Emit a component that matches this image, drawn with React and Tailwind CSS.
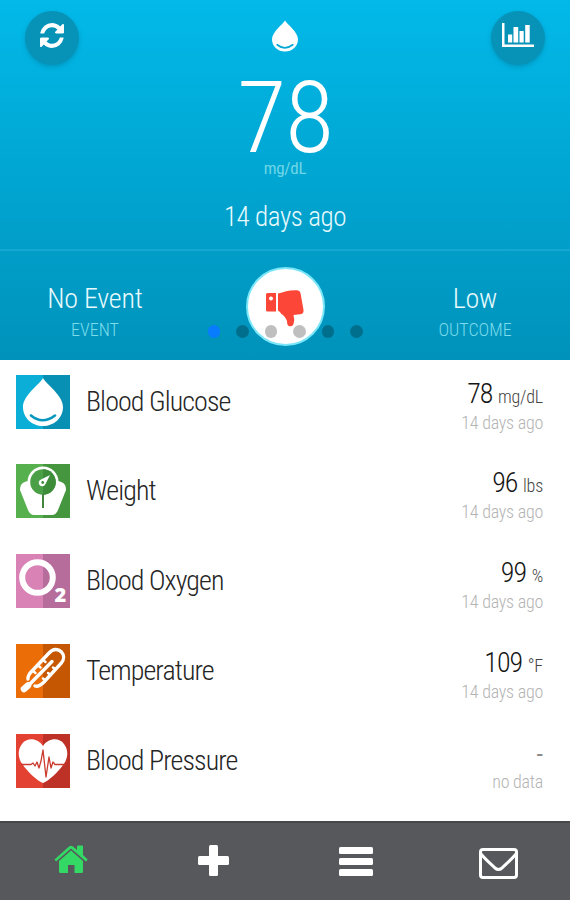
import React from 'react';

const RefreshIcon = () => (
  <svg viewBox="0 0 1536 1536" className="w-[24px] h-[25px]" fill="currentColor" preserveAspectRatio="none">
    <path d="M1511 928q0 5-1 7-64 268-268 434.5t-478 166.5q-146 0-282.5-55t-243.5-157l-129 129q-19 19-45 19t-45-19-19-45v-448q0-26 19-45t45-19h448q26 0 45 19t19 45-19 45l-137 137q71 66 161 102t187 36q134 0 250-65t186-179q11-17 53-117 8-23 30-23h192q13 0 22.5 9.500t9.500 22.500z" />
    <path d="M1536 128v448q0 26-19 45t-45 19h-448q-26 0-45-19t-19-45 19-45l138-138q-148-137-349-137-134 0-250 65t-186 179q-11 17-53 117-8 23-30 23h-199q-13 0-22.500-9.500t-9.500-22.500v-7q65-268 270-434.500t480-166.500q146 0 284 55.500t245 156.500l130-129q19-19 45-19t45 19 19 45z" />
  </svg>
);

const ChartIcon = () => (
  <svg viewBox="0 0 32 25" className="w-8 h-[25px]" fill="currentColor">
    <path d="M0 0h2.500v21.500H32V24H0z" />
    <path d="M6 11.500h4.200v8H6zM11.500 4h4.700v15.500h-4.700zM17.500 8h4.200v11.500h-4.200zM23.200 2h4.500v17.500h-4.500z" />
  </svg>
);

const DropIcon = ({ className, smile }) => (
  <svg viewBox="0 0 40 48" className={className} fill="none">
    <path d="M20 0C17 6 0 17 0 29C0 40 9 48 20 48S40 40 40 29C40 17 23 6 20 0Z" fill="white" />
    <path d="M8 37.500Q19.500 47 32 37.500" stroke={smile} strokeWidth="2.600" strokeLinecap="round" />
  </svg>
);

const ThumbsDownIcon = () => (
  <svg viewBox="0 0 38 37" className="w-[38px] h-[37px] mt-[3px]">
    <path d="M0 4.500Q0 3 1.500 3H10V21.500H1.500Q0 21.500 0 20ZM5 6.500a2 2 0 1 0 .01 0Z" fill="#fb4638" fillRule="evenodd" />
    <path d="M12 3.500C18 2 23 0 31 .3Q34 .5 34.500 3L37.500 20Q38 24 34 24.300L27.500 25Q29 30 27.500 34Q26.500 37 23 36Q21 35.500 21 31Q19 26 15.500 24Q14 21.500 12 20.500Z" fill="#fb4638" />
  </svg>
);

const ScaleIcon = () => (
  <svg viewBox="0 0 54 54" className="size-full">
    <path d="M12 17C6 18 4 21 4 26L12 46Q14 51 18 51H36Q40 51 42 46L50 26C50 21 48 18 42 17Z" fill="white" />
    <circle cx="27" cy="18" r="15.500" fill="white" />
    <circle cx="27" cy="18" r="12.800" fill="#4ba047" />
    <path d="M27 5.200a12.800 12.800 0 0 1 0 25.600z" fill="#3c8c3a" />
    <path d="M27 30V44" stroke="#43853f" strokeWidth="2" />
    <path d="M34 11L29.500 20A3.500 3.500 0 1 1 25 15.500Z" fill="white" />
    <circle cx="26.700" cy="18.500" r="1.400" fill="#3f8f3c" />
  </svg>
);

const OxygenIcon = () => (
  <svg viewBox="0 0 54 54" className="size-full font-stretch-normal">
    <circle cx="21.500" cy="23.500" r="15.300" fill="none" stroke="white" strokeWidth="6" />
    <text x="38.500" y="48" fontFamily="Open Sans" fontWeight="800" fontSize="20" fill="white">2</text>
  </svg>
);

const ThermometerIcon = () => (
  <svg viewBox="0 0 54 54" className="size-full" fill="none" stroke="white" strokeLinecap="round">
    <path d="M12 35C11.500 31 14 29 17 26L33 9C37 4.500 42 4.500 45.500 8C49 12 48.500 15 45 19.500L28 38C25 41 22 43 19 42" strokeWidth="3.400" />
    <path d="M10 44L36 17.500" strokeWidth="3.400" />
    <path d="M17 27L19.500 29M22 21.500L24.500 23.500M27 16L29.500 18M29 36L27 34.500M34 30.500L32 29M39 25L37 23.500" strokeWidth="2.400" />
    <path d="M8 45L12 41.500" strokeWidth="6.500" />
  </svg>
);

const HeartIcon = () => (
  <svg viewBox="0 0 54 54" className="size-full">
    <path d="M27 12C22 4 11 3 6 10C1 16 2 25 7 31C12 38 20 46 27 49C34 46 42 38 47 31C52 25 53 16 48 10C43 3 32 4 27 12Z" fill="white" />
    <path d="M5 30.500H15L17 29L19 32L21 28L23 34L25 27L27 16L30 43L33 23L35 34L37 28L39 30.500H49" fill="none" stroke="#cb3a2e" strokeWidth="1.300" strokeLinejoin="round" />
  </svg>
);

const HomeIcon = () => (
  <svg viewBox="0 0 34 29" className="w-[34px] h-[29px] mb-1" fill="#34d865">
    <path d="M17 5.500L29 16V26.500Q29 28 27.500 28H20.500V20H14V28H6.500Q5 28 5 26.500V16Z" />
    <path d="M.5 14.500L15 1.500Q17 0 19 1.500L23 5V1.500Q23 .5 24 .5H28Q29 .5 29 1.500V10L33.700 14.500L32 16.500L17 3.500L2 16.500Z" />
  </svg>
);

const PlusIcon = () => (
  <svg viewBox="0 0 31 31" className="size-[31px] mb-[3px]" fill="white">
    <rect x="11" width="9" height="31" rx="1.500" />
    <rect y="11" width="31" height="9" rx="1.500" />
  </svg>
);

const MenuIcon = () => (
  <svg viewBox="0 0 34 29" className="w-[34px] h-[29px]" fill="white">
    <rect width="34" height="7" rx="1.500" />
    <rect y="11" width="34" height="7" rx="1.500" />
    <rect y="22" width="34" height="7" rx="1.500" />
  </svg>
);

const MailIcon = () => (
  <svg viewBox="0 0 39 31" className="w-[39px] h-[31px] mt-[3px]" fill="none" stroke="white" strokeWidth="3" strokeLinejoin="round">
    <rect x="1.500" y="1.500" width="36" height="28" rx="2.500" />
    <path d="M2 6C7 12 12 16 16 20Q19.500 23 23 20C27 16 32 12 37 6" />
  </svg>
);

const readings = [
  {
    name: 'Blood Glucose', value: '78', unit: 'mg/dL', time: '14 days ago',
    tile: 'from-[#0aaed6] to-[#0790b4]',
    icon: <DropIcon className="w-10 h-12 mt-[3px] mx-auto" smile="#0796bd" />,
  },
  { name: 'Weight', value: '96', unit: 'lbs', time: '14 days ago', tile: 'from-[#55b04d] to-[#469640]', icon: <ScaleIcon /> },
  { name: 'Blood Oxygen', value: '99', unit: '%', time: '14 days ago', tile: 'from-[#d982b5] to-[#b76d9b]', icon: <OxygenIcon /> },
  { name: 'Temperature', value: '109', unit: '°F', time: '14 days ago', tile: 'from-[#ea6d08] to-[#c55703]', icon: <ThermometerIcon /> },
  { name: 'Blood Pressure', value: '-', unit: '', time: 'no data', tile: 'from-[#e34232] to-[#bd3127]', icon: <HeartIcon /> },
];

const dots = ['bg-[#087cff]', 'bg-black/25', 'bg-black/25', 'bg-black/25', 'bg-black/25', 'bg-black/25'];

const App = () => {
  return (
    <div className="w-[570px] h-[900px] flex flex-col overflow-hidden bg-white font-['Roboto_Condensed','Roboto',sans-serif] font-stretch-condensed font-light">
      <header className="h-[360px] shrink-0 flex flex-col bg-linear-to-b from-[#02b9e9] to-[#0092ba] text-white">
        <div className="h-[249px] flex justify-between px-[25px] pt-[11px]">
          <button className="size-[54px] rounded-full bg-[#0793b8] shadow-[0_2px_4px_rgba(0,110,145,0.4)] flex justify-center pt-3">
            <RefreshIcon />
          </button>
          <div className="flex flex-col items-center">
            <DropIcon className="w-[26px] h-8 mt-[9px]" smile="#04a8d3" />
            <div className="text-[101px] leading-[74px] tracking-[-1.500px] mt-[29px] h-[77px]">78</div>
            <div className="text-[17px] leading-5 tracking-[-0.300px] font-normal text-[#6fd6e8]">mg/dL</div>
            <div className="text-[27px] leading-8 tracking-[-0.400px] mt-[23px] text-[#e8fafd]">14 days ago</div>
          </div>
          <button className="size-[54px] rounded-full bg-[#0793b8] shadow-[0_2px_4px_rgba(0,110,145,0.4)] flex justify-center pt-3">
            <ChartIcon />
          </button>
        </div>
        <div className="relative h-[111px] border-t-2 border-[#16a8d3] grid grid-cols-[190px_190px_190px]">
          <div className="flex flex-col items-center pt-8">
            <div className="text-[28px] leading-8 tracking-[-0.200px] text-[#e8fafd]">No Event</div>
            <div className="text-[18px] leading-5 mt-[5px] text-[#7bdcec]">EVENT</div>
          </div>
          <div className="flex justify-center pt-4">
            <div className="size-[79px] rounded-full bg-white border-2 border-[#7be6f8] flex items-center justify-center">
              <ThumbsDownIcon />
            </div>
          </div>
          <div className="flex flex-col items-center pt-8">
            <div className="text-[28px] leading-8 tracking-[-0.200px] text-[#e8fafd]">Low</div>
            <div className="text-[18px] leading-5 mt-[5px] text-[#7bdcec]">OUTCOME</div>
          </div>
          <div className="absolute left-0 right-0 top-[74px] flex justify-center gap-4">
            {dots.map((dot, i) => (
              <span key={i} className={`size-[12.500px] rounded-full ${dot}`} />
            ))}
          </div>
        </div>
      </header>

      <main className="h-[461px] shrink-0 flex flex-col pl-4 pr-[27px] pt-[15px]">
        {readings.map((item) => (
          <div key={item.name} className="h-[90.200px] first:h-[88.500px] shrink-0 flex items-start">
            <div className={`size-[54px] bg-linear-to-r from-50% to-50% ${item.tile}`}>{item.icon}</div>
            <div className="flex-1 ml-4 mt-[11px] text-[28px] leading-8 tracking-[-0.900px] text-[#252525]">{item.name}</div>
            <div className="text-right">
              {item.unit ? (
                <div className="mt-[3px] text-[28px] leading-8 tracking-[-0.900px] text-[#151515]">
                  {item.value}{' '}
                  <span className="text-[18px] tracking-[-0.200px] text-[#444444]">{item.unit}</span>
                </div>
              ) : (
                <div className="mt-1 mb-[2px] text-[26px] leading-8 font-normal text-[#8a8a8a]">{item.value}</div>
              )}
              <div className="text-[18px] leading-5 tracking-[-0.250px] text-[#b4b4b4]">{item.time}</div>
            </div>
          </div>
        ))}
      </main>

      <nav className="h-[79px] shrink-0 grid grid-cols-4 justify-items-center items-center bg-[#57585b] border-t-2 border-[#47484b]">
        <HomeIcon />
        <PlusIcon />
        <MenuIcon />
        <MailIcon />
      </nav>
    </div>
  );
};

export default App;
